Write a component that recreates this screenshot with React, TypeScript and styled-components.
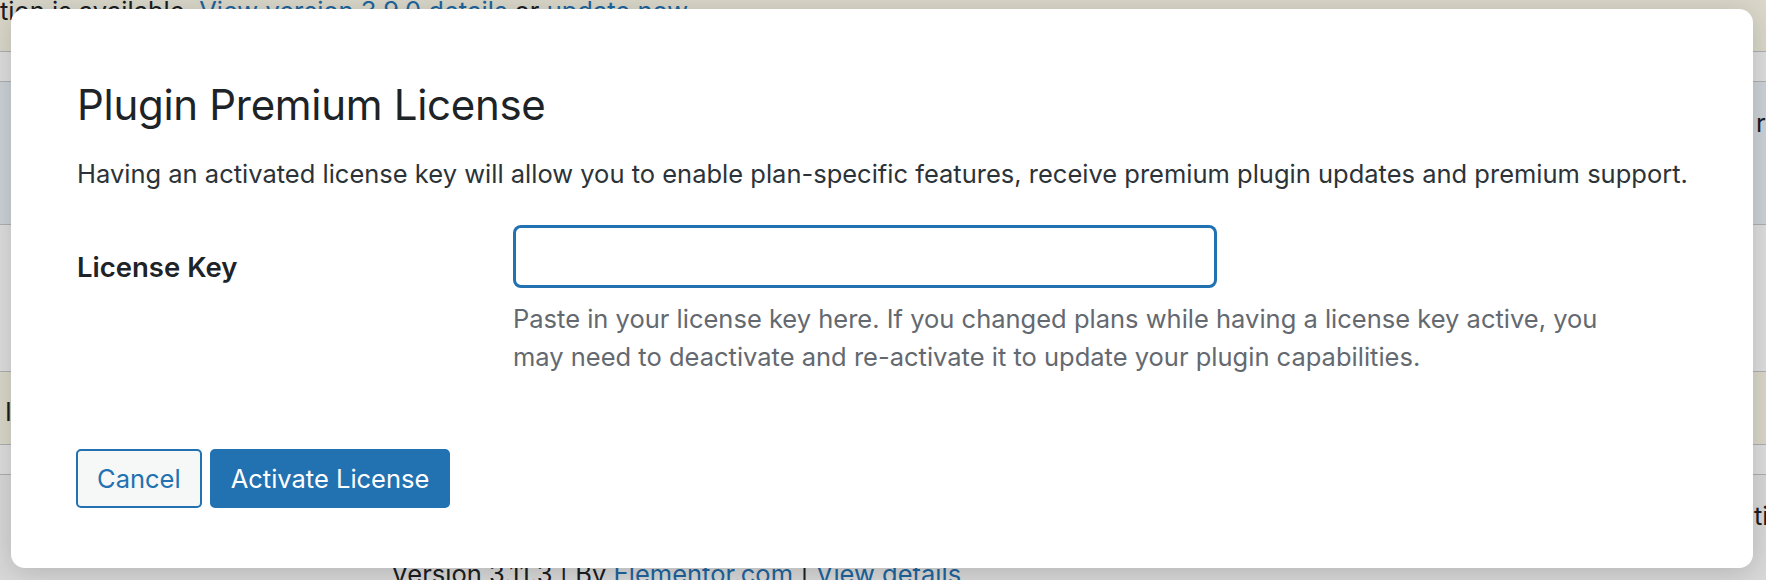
import React from "react";
import styled, { createGlobalStyle } from "styled-components";

const GlobalStyle = createGlobalStyle`
  html, body {
    margin: 0;
    padding: 0;
  }
  body {
    width: 1766px;
    height: 580px;
    overflow: hidden;
    background: #f0f0f1;
    font-family: Inter, "Liberation Sans", Arial, sans-serif;
  }
`;

const Screen = styled.div`
  position: relative;
  width: 1766px;
  height: 580px;
  overflow: hidden;
`;

// plugin list page that sits behind the dialog
const PluginList = styled.div`
  display: flex;
  flex-direction: column;
  margin-top: -12px;
`;

const ListRow = styled.div<{ $bg: string; $h: number }>`
  display: grid;
  grid-template-columns: 1754px 1fr;
  height: ${p => p.$h}px;
  box-sizing: border-box;
  background: ${p => p.$bg};
  border-bottom: 1px solid #c3c4c7;
  font-size: 25.5px;
  line-height: 38px;
  color: #1d2327;
  white-space: nowrap;
  overflow: hidden;
`;

const Cell = styled.div<{ $pt?: number; $pl?: number }>`
  padding-top: ${p => p.$pt ?? 0}px;
  padding-left: ${p => p.$pl ?? 0}px;
`;

const PageLink = styled.span`
  color: #2271b1;
`;

const Overlay = styled.div`
  position: absolute;
  inset: 0;
  background: rgba(0, 0, 0, 0.1);
`;

const Dialog = styled.div`
  position: absolute;
  left: 11px;
  top: 9px;
  width: 1742px;
  box-sizing: border-box;
  padding: 70px 30px 60px 66px;
  background: #fff;
  border-radius: 14px;
  box-shadow: 0 4px 30px rgba(0, 0, 0, 0.18);
`;

const Title = styled.h2`
  margin: 0;
  font-size: 42px;
  line-height: 52px;
  font-weight: 400;
  letter-spacing: -0.3px;
  color: #1d2327;
`;

const Intro = styled.p`
  margin: 24px 0 0;
  font-size: 25.5px;
  line-height: 38px;
  color: #2c3338;
  white-space: nowrap;
`;

const FieldRow = styled.div`
  display: grid;
  grid-template-columns: 436px 1fr;
  margin-top: 32px;
`;

const FieldLabel = styled.label`
  padding-top: 24px;
  font-size: 27.5px;
  line-height: 36px;
  font-weight: 600;
  color: #1d2327;
`;

const Field = styled.div`
  display: flex;
  flex-direction: column;
  align-items: flex-start;
`;

const KeyInput = styled.input`
  box-sizing: border-box;
  width: 702px;
  height: 61px;
  margin: 1px;
  padding: 0 16px;
  border: 2px solid #2271b1;
  box-shadow: 0 0 0 1px #2271b1;
  border-radius: 7px;
  outline: none;
  background: #fff;
  font-family: inherit;
  font-size: 25.5px;
`;

const Help = styled.p`
  margin: 12px 0 0;
  width: 1110px;
  font-size: 25.5px;
  line-height: 38.3px;
  color: #646970;
`;

const Actions = styled.div`
  display: flex;
  gap: 8px;
  margin: 72px 0 0 -1px;
`;

const Button = styled.button<{ $primary?: boolean }>`
  height: 59px;
  padding: 0 19px;
  border: 2px solid #2271b1;
  border-radius: 5px;
  background: ${p => (p.$primary ? "#2271b1" : "#f6f7f7")};
  color: ${p => (p.$primary ? "#fff" : "#2271b1")};
  font-family: inherit;
  font-size: 25.5px;
  cursor: pointer;
`;

export default function App() {
  return (
    <Screen>
      <GlobalStyle />
      <PluginList>
        <ListRow $bg="#f4f1e2" $h={64}>
          <Cell $pt={4}>
            tion is available. <PageLink>View version 3.9.0 details</PageLink> or <PageLink>update now</PageLink>.
          </Cell>
          <Cell />
        </ListRow>
        <ListRow $bg="#f9f9f9" $h={30}>
          <Cell />
          <Cell />
        </ListRow>
        <ListRow $bg="#e5ebf1" $h={143}>
          <Cell />
          <Cell $pt={22} $pl={2}>rrent</Cell>
        </ListRow>
        <ListRow $bg="#f9f9f9" $h={147}>
          <Cell />
          <Cell />
        </ListRow>
        <ListRow $bg="#f4f1e2" $h={73}>
          <Cell $pt={21} $pl={5}>I</Cell>
          <Cell />
        </ListRow>
        <ListRow $bg="#f9f9f9" $h={30}>
          <Cell />
          <Cell />
        </ListRow>
        <ListRow $bg="#f2f2f2" $h={140}>
          <Cell $pt={80} $pl={391}>
            Version 3.11.3 | By <PageLink>Elementor.com</PageLink> | <PageLink>View details</PageLink>
          </Cell>
          <Cell $pt={22}>tion</Cell>
        </ListRow>
      </PluginList>
      <Overlay />
      <Dialog role="dialog">
        <Title>Plugin Premium License</Title>
        <Intro>
          Having an activated license key will allow you to enable plan-specific features, receive premium plugin updates and premium support.
        </Intro>
        <FieldRow>
          <FieldLabel htmlFor="license-key">License Key</FieldLabel>
          <Field>
            <KeyInput id="license-key" type="text" />
            <Help>
              Paste in your license key here. If you changed plans while having a license key active, you may need to deactivate and re-activate it to update your plugin capabilities.
            </Help>
          </Field>
        </FieldRow>
        <Actions>
          <Button>Cancel</Button>
          <Button $primary>Activate License</Button>
        </Actions>
      </Dialog>
    </Screen>
  );
}
